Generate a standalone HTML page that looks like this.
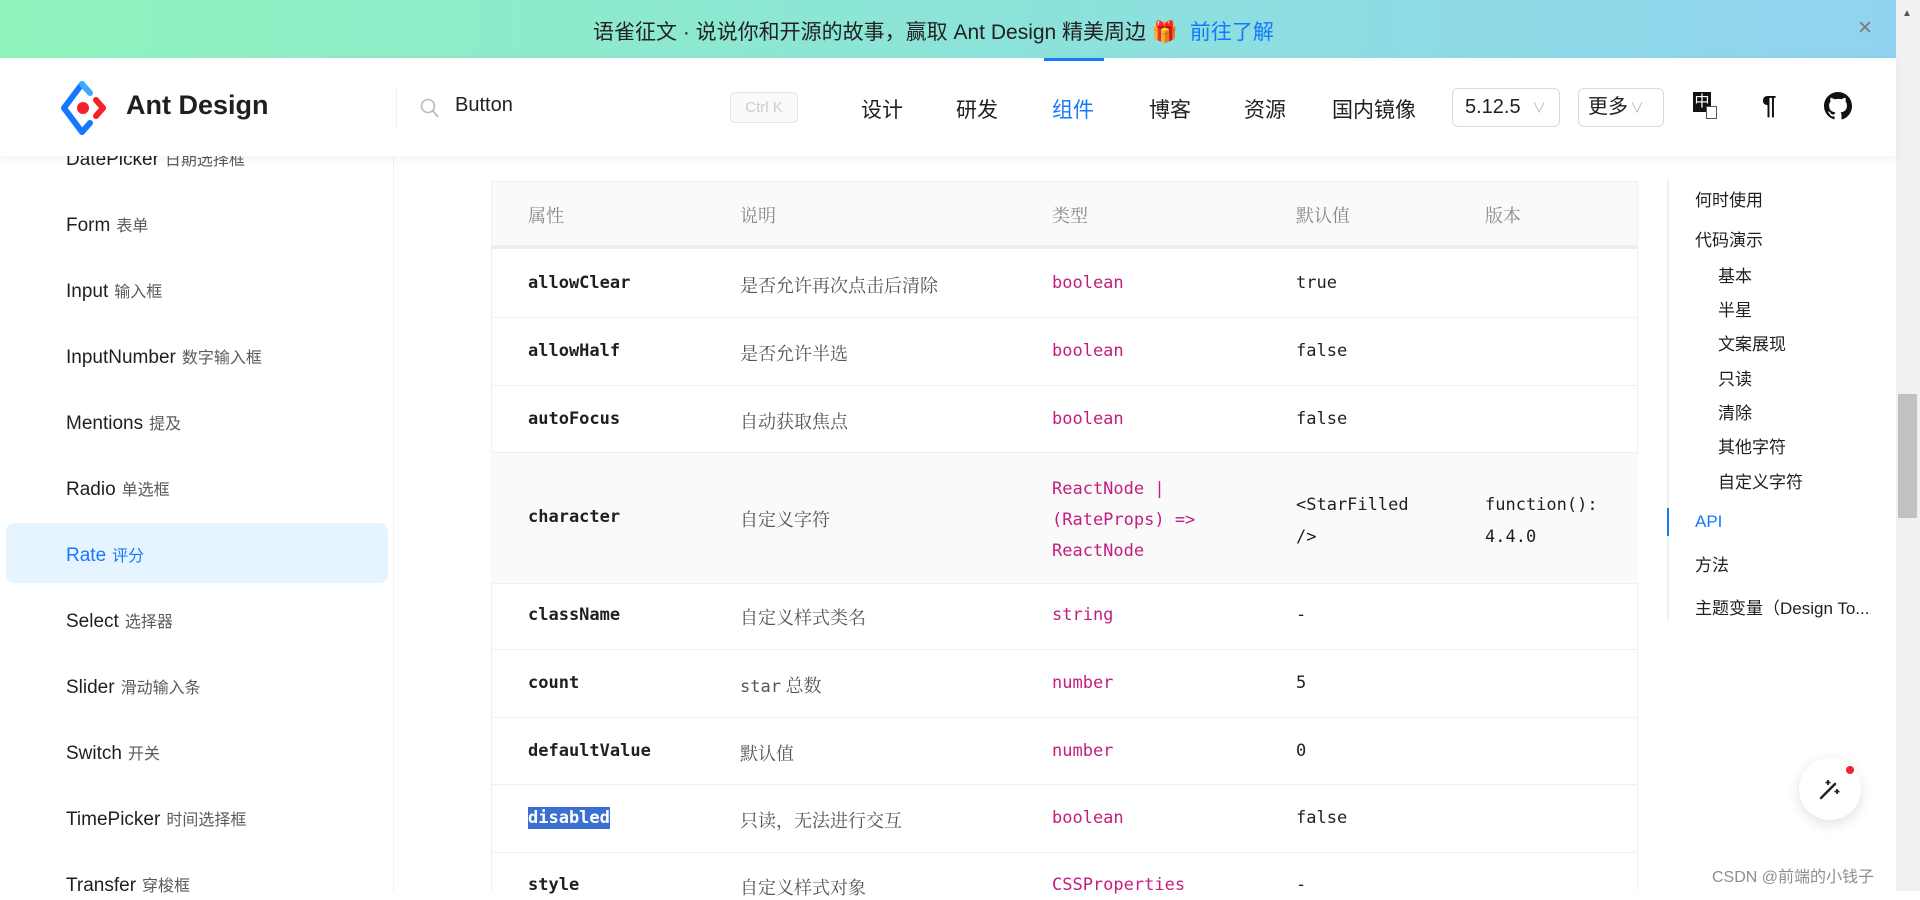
<!DOCTYPE html>
<html><head><meta charset="utf-8"><style>
*{margin:0;padding:0;box-sizing:border-box}
body{width:1920px;height:891px;overflow:hidden;background:#fff;font-family:"Liberation Sans","Noto Sans CJK SC",sans-serif;color:rgba(0,0,0,.88);position:relative}
.a{position:absolute;white-space:nowrap}
.banner{left:0;top:0;width:1896px;height:58px;background:linear-gradient(90deg,#8ff3bb,#8ce4d8 50%,#90d3f0)}
.hdr{left:0;top:58px;width:1896px;height:98px;background:#fff;box-shadow:0 2px 8px rgba(0,0,0,.06);z-index:5}
.side{left:0;top:156px;width:394px;height:735px;border-right:1px solid #f0f0f0}
.mi{position:absolute;left:66px;font-size:19px;color:rgba(0,0,0,.88)}
.mi small{font-size:16px;color:rgba(0,0,0,.65);margin-left:6px}
.row{position:absolute;left:491px;width:1147px;border-bottom:1px solid #f0f0f0}
.c{position:absolute;font-size:18px}
.code{font-family:"DejaVu Sans Mono","Liberation Mono",monospace;font-size:17px}
.b{font-weight:bold;color:#1f1f1f}
.t{color:#c41d7f}
.d{color:#555;font-family:"Liberation Serif","Noto Serif CJK SC",serif}
.toc{position:absolute;font-size:17px;color:rgba(0,0,0,.88)}
.nav{position:absolute;font-size:21px;color:rgba(0,0,0,.88)}
</style></head><body>
<div class="a banner"></div>
<div class="a" style="left:593px;top:16px;font-size:21px;color:#222">语雀征文 · 说说你和开源的故事，赢取 Ant Design 精美周边 <span style="color:#e89a1b">🎁</span> <span style="color:#1677ff;margin-left:6px">前往了解</span></div>
<div class="a" style="left:1858px;top:14px;font-size:24px;color:#777">×</div>
<div class="a" style="left:1896px;top:0;width:24px;height:891px;background:#f1f1f1"></div>
<div class="a" style="left:1898px;top:394px;width:19px;height:124px;background:#c1c1c1"></div>
<div class="a" style="left:1902px;top:8px;font-size:10px;color:#555">▲</div>

<div class="a hdr">
 <svg class="a" style="left:58px;top:22px" width="54" height="56" viewBox="0 0 54 56"><path d="M24 4 L6 28 L24 52" fill="none" stroke="#1677ff" stroke-width="6" stroke-linejoin="round" stroke-linecap="round"/><path d="M24 4 L32 13" stroke="#40a9ff" stroke-width="6" stroke-linecap="round"/><path d="M24 52 L32 43" stroke="#1677ff" stroke-width="6" stroke-linecap="round"/><path d="M38 20 L45 28 L38 36" fill="none" stroke="#f5222d" stroke-width="6" stroke-linejoin="round" stroke-linecap="round"/><circle cx="25" cy="28" r="6" fill="#f5222d"/></svg>
 <div class="a" style="left:126px;top:32px;font-size:27px;font-weight:600;color:#1f1f1f">Ant Design</div>
 <div class="a" style="left:396px;top:30px;width:1px;height:40px;background:#f0f0f0"></div>
 <svg class="a" style="left:420px;top:40px" width="20" height="22" viewBox="0 0 20 22"><circle cx="8" cy="8" r="6.5" fill="none" stroke="#bbb" stroke-width="1.6"/><path d="M13 13 L18 19" stroke="#bbb" stroke-width="1.8"/></svg>
 <div class="a" style="left:455px;top:36px;font-size:20px;color:#222">Button</div>
 <div class="a" style="left:730px;top:34px;width:68px;height:31px;border:1px solid #e5e5e5;border-radius:5px;background:#fafafa;color:#ccc;font-size:15px;text-align:center;line-height:29px">Ctrl K</div>
 <div class="a" style="left:1044px;top:0;width:60px;height:3px;background:#1677ff"></div>
 <div class="nav" style="left:861px;top:36px">设计</div>
 <div class="nav" style="left:956px;top:36px">研发</div>
 <div class="nav" style="left:1052px;top:36px;color:#1677ff">组件</div>
 <div class="nav" style="left:1149px;top:36px">博客</div>
 <div class="nav" style="left:1244px;top:36px">资源</div>
 <div class="nav" style="left:1332px;top:36px">国内镜像</div>
 <div class="a" style="left:1452px;top:30px;width:108px;height:39px;border:1px solid #d9d9d9;border-radius:6px;font-size:20px;line-height:37px;padding-left:12px">5.12.5 <span style="color:#bbb;font-size:14px;margin-left:6px">∨</span></div>
 <div class="a" style="left:1578px;top:30px;width:86px;height:39px;border:1px solid #d9d9d9;border-radius:6px;font-size:20px;line-height:37px;padding-left:9px">更多<span style="color:#bbb;font-size:14px;margin-left:2px">∨</span></div>
 <div class="a" style="left:1693px;top:34px;width:18px;height:20px;background:#111;color:#fff;font-size:15px;line-height:20px;text-align:center">中</div>
 <div class="a" style="left:1706px;top:48px;width:11px;height:13px;border:1px solid #555;background:#fff"></div>
 <div class="a" style="left:1762px;top:32px;font-size:26px;font-weight:bold;color:#111">¶</div>
 <svg class="a" style="left:1824px;top:34px" width="28" height="28" viewBox="0 0 16 16"><path fill="#111" d="M8 0C3.58 0 0 3.58 0 8c0 3.54 2.290 6.53 5.47 7.59.4.07.55-.17.55-.38v-1.33c-2.230.48-2.700-1.070-2.700-1.070-.36-.92-.89-1.170-.89-1.170-.73-.5.06-.49.06-.49.8.06 1.230.83 1.230.83.71 1.220 1.870.87 2.330.66.07-.52.28-.87.5-1.070-1.780-.2-3.640-.89-3.640-3.950 0-.87.31-1.590.82-2.150-.08-.2-.36-1.020.08-2.120 0 0 .67-.21 2.200.82a7.6 7.6 0 014 0c1.530-1.040 2.200-.82 2.200-.82.44 1.100.16 1.920.08 2.120.51.56.82 1.270.82 2.150 0 3.070-1.870 3.750-3.650 3.950.29.25.54.73.54 1.480v2.200c0 .21.15.46.55.38A8 8 0 0016 8c0-4.420-3.580-8-8-8z"/></svg>
</div>

<div class="a side"></div>
<div class="mi" style="top:146px">DatePicker<small>日期选择框</small></div>
<div class="mi" style="top:212px">Form<small>表单</small></div>
<div class="mi" style="top:278px">Input<small>输入框</small></div>
<div class="mi" style="top:344px">InputNumber<small>数字输入框</small></div>
<div class="mi" style="top:410px">Mentions<small>提及</small></div>
<div class="mi" style="top:476px">Radio<small>单选框</small></div>
<div class="a" style="left:6px;top:523px;width:382px;height:60px;background:#e6f4ff;border-radius:8px"></div>
<div class="mi" style="top:542px;color:#1677ff">Rate<small style="color:#1677ff">评分</small></div>
<div class="mi" style="top:608px">Select<small>选择器</small></div>
<div class="mi" style="top:674px">Slider<small>滑动输入条</small></div>
<div class="mi" style="top:740px">Switch<small>开关</small></div>
<div class="mi" style="top:806px">TimePicker<small>时间选择框</small></div>
<div class="mi" style="top:872px">Transfer<small>穿梭框</small></div>

<div class="a" style="left:491px;top:181px;width:1147px;height:68px;background:#fafafa;border:1px solid #f0f0f0;border-bottom:4px solid #eee"></div>
<div class="c d" style="left:528px;top:202px;color:#888">属性</div>
<div class="c d" style="left:740px;top:202px;color:#888">说明</div>
<div class="c d" style="left:1052px;top:202px;color:#888">类型</div>
<div class="c d" style="left:1296px;top:202px;color:#888">默认值</div>
<div class="c d" style="left:1485px;top:202px;color:#888">版本</div>
<div class="a" style="left:491px;top:249px;width:1px;height:642px;background:#f0f0f0"></div>
<div class="a" style="left:1637px;top:249px;width:1px;height:642px;background:#f0f0f0"></div>

<div class="row" style="top:249px;height:69px"></div>
<div class="c code b" style="left:528px;top:273px">allowClear</div><div class="c d" style="left:740px;top:272px">是否允许再次点击后清除</div><div class="c code t" style="left:1052px;top:273px">boolean</div><div class="c code" style="left:1296px;top:273px">true</div>
<div class="row" style="top:318px;height:68px"></div>
<div class="c code b" style="left:528px;top:341px">allowHalf</div><div class="c d" style="left:740px;top:340px">是否允许半选</div><div class="c code t" style="left:1052px;top:341px">boolean</div><div class="c code" style="left:1296px;top:341px">false</div>
<div class="row" style="top:386px;height:67px"></div>
<div class="c code b" style="left:528px;top:409px">autoFocus</div><div class="c d" style="left:740px;top:408px">自动获取焦点</div><div class="c code t" style="left:1052px;top:409px">boolean</div><div class="c code" style="left:1296px;top:409px">false</div>
<div class="row" style="top:453px;height:131px;background:#fafafa"></div>
<div class="c code b" style="left:528px;top:507px">character</div><div class="c d" style="left:740px;top:506px">自定义字符</div>
<div class="c code t" style="left:1052px;top:474px;line-height:31px">ReactNode |<br>(RateProps) =&gt;<br>ReactNode</div>
<div class="c code" style="left:1296px;top:489px;line-height:32px">&lt;StarFilled<br>/&gt;</div>
<div class="c code" style="left:1485px;top:489px;line-height:32px">function():<br>4.4.0</div>
<div class="row" style="top:584px;height:66px"></div>
<div class="c code b" style="left:528px;top:605px">className</div><div class="c d" style="left:740px;top:604px">自定义样式类名</div><div class="c code t" style="left:1052px;top:605px">string</div><div class="c code" style="left:1296px;top:605px">-</div>
<div class="row" style="top:650px;height:68px"></div>
<div class="c code b" style="left:528px;top:673px">count</div><div class="c d" style="left:740px;top:672px"><span class="code">star</span> 总数</div><div class="c code t" style="left:1052px;top:673px">number</div><div class="c code" style="left:1296px;top:673px">5</div>
<div class="row" style="top:718px;height:67px"></div>
<div class="c code b" style="left:528px;top:741px">defaultValue</div><div class="c d" style="left:740px;top:740px">默认值</div><div class="c code t" style="left:1052px;top:741px">number</div><div class="c code" style="left:1296px;top:741px">0</div>
<div class="row" style="top:785px;height:68px"></div>
<div class="c code b" style="left:528px;top:807px;background:#3b6fd0;color:#fff;padding:1px 0">disabled</div><div class="c d" style="left:740px;top:807px">只读，无法进行交互</div><div class="c code t" style="left:1052px;top:808px">boolean</div><div class="c code" style="left:1296px;top:808px">false</div>
<div class="c code b" style="left:528px;top:875px">style</div><div class="c d" style="left:740px;top:874px">自定义样式对象</div><div class="c code t" style="left:1052px;top:875px">CSSProperties</div><div class="c code" style="left:1296px;top:875px">-</div>

<div class="a" style="left:1667px;top:180px;width:2px;height:440px;background:#f0f0f0"></div>
<div class="a" style="left:1667px;top:508px;width:2px;height:28px;background:#1677ff"></div>
<div class="toc" style="left:1695px;top:186px">何时使用</div>
<div class="toc" style="left:1695px;top:226px">代码演示</div>
<div class="toc" style="left:1718px;top:262px">基本</div>
<div class="toc" style="left:1718px;top:296px">半星</div>
<div class="toc" style="left:1718px;top:330px">文案展现</div>
<div class="toc" style="left:1718px;top:365px">只读</div>
<div class="toc" style="left:1718px;top:399px">清除</div>
<div class="toc" style="left:1718px;top:433px">其他字符</div>
<div class="toc" style="left:1718px;top:468px">自定义字符</div>
<div class="toc" style="left:1695px;top:512px;color:#1677ff">API</div>
<div class="toc" style="left:1695px;top:551px">方法</div>
<div class="toc" style="left:1695px;top:594px">主题变量（Design To...</div>

<div class="a" style="left:1799px;top:758px;width:62px;height:62px;border-radius:50%;background:#fff;box-shadow:0 4px 14px rgba(0,0,0,.12)"></div>
<svg class="a" style="left:1816px;top:775px" width="28" height="28" viewBox="0 0 28 28"><path d="M5 23 L19 9" stroke="#222" stroke-width="2.5" stroke-linecap="round"/><path d="M12 5 v5 M9.5 7.5 h5 M21 14 v5 M18.5 16.5 h5" stroke="#222" stroke-width="1.8"/></svg>
<div class="a" style="left:1846px;top:766px;width:8px;height:8px;border-radius:50%;background:#f5222d"></div>
<div class="a" style="left:1712px;top:863px;font-size:16px;color:rgba(0,0,0,.45)">CSDN @前端的小钱子</div>
</body></html>
